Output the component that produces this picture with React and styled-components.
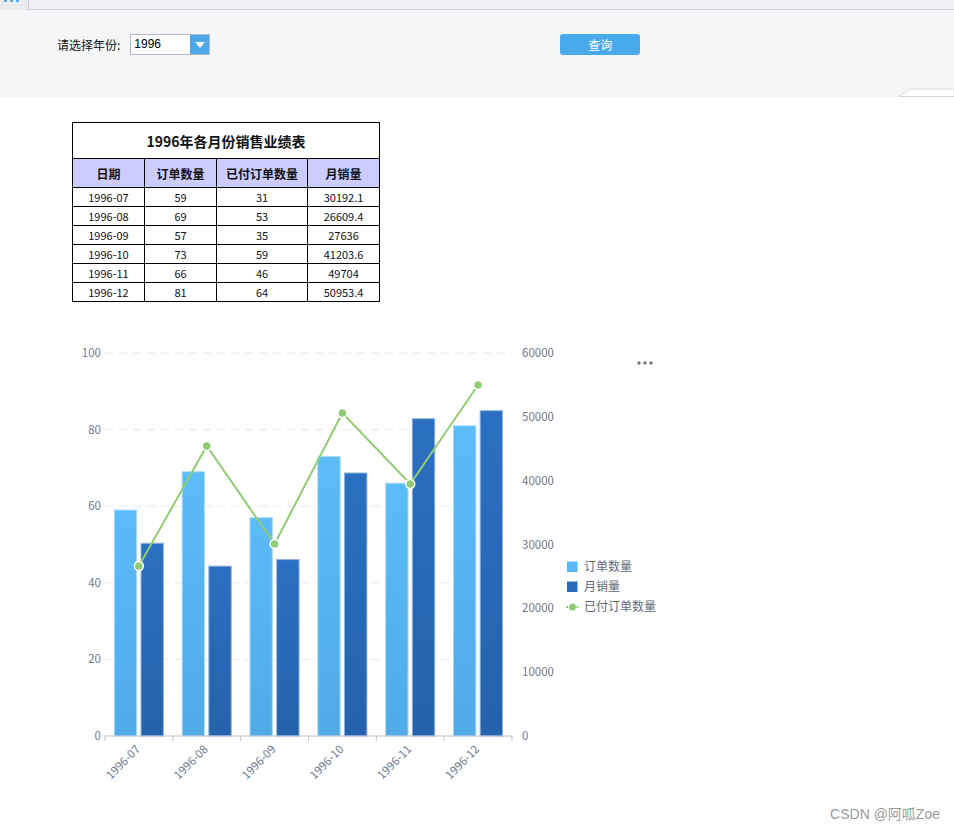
import React from "react";
import styled, { createGlobalStyle } from "styled-components";

const GlobalStyle = createGlobalStyle`
  html, body {
    margin: 0;
    padding: 0;
    background: #ffffff;
    font-family: "Noto Sans CJK SC", "Noto Sans", sans-serif;
  }
`;

const months = ["1996-07", "1996-08", "1996-09", "1996-10", "1996-11", "1996-12"];
const rows = [
  ["1996-07", 59, 31, "30192.1"],
  ["1996-08", 69, 53, "26609.4"],
  ["1996-09", 57, 35, "27636"],
  ["1996-10", 73, 59, "41203.6"],
  ["1996-11", 66, 46, "49704"],
  ["1996-12", 81, 64, "50953.4"],
];
const colWidths = [72, 72, 91, 72];
const orders = [59, 69, 57, 73, 66, 81];
const sales = [30192.1, 26609.4, 27636, 41203.6, 49704, 50953.4];
// line points as they sit in the picture
const linePts = [565, 445, 543, 412, 483, 384];

export default function App() {
  return (
    <>
      <GlobalStyle />
      <Page>
        <Header>
          <TabStrip>
            <Tab>
              <TabMark />
              <TabMark />
              <TabMark />
            </Tab>
          </TabStrip>
          <FormRow>
            <Label>请选择年份:</Label>
            <Select>
              <SelectValue>1996</SelectValue>
              <SelectArrow>
                <svg width="10" height="6" viewBox="0 0 10 6">
                  <path d="M0 0 L10 0 L5 6 Z" fill="#fff" />
                </svg>
              </SelectArrow>
            </Select>
            <QueryButton>查询</QueryButton>
          </FormRow>
          <CollapseTab>
            <svg width="56" height="9" viewBox="0 0 56 9">
              <path d="M1 8.5 L12 1 L56 1 L56 8.5 Z" fill="#fff" stroke="#d8d8d8" />
            </svg>
          </CollapseTab>
        </Header>

        <Content>
          <Table>
            <colgroup>
              {colWidths.map((w, i) => (
                <col key={i} style={{ width: w }} />
              ))}
            </colgroup>
            <tbody>
              <tr>
                <TitleCell colSpan={4}>1996年各月份销售业绩表</TitleCell>
              </tr>
              <tr>
                <HeadCell>日期</HeadCell>
                <HeadCell>订单数量</HeadCell>
                <HeadCell>已付订单数量</HeadCell>
                <HeadCell>月销量</HeadCell>
              </tr>
              {rows.map((r) => (
                <tr key={r[0]}>
                  {r.map((c, i) => (
                    <DataCell key={i}>{c}</DataCell>
                  ))}
                </tr>
              ))}
            </tbody>
          </Table>

          <ChartBox>
            <Chart />
          </ChartBox>
        </Content>

        <Watermark>CSDN @阿呱Zoe</Watermark>
      </Page>
    </>
  );
}

function Chart() {
  const x0 = 105;
  const x1 = 512;
  const base = 735;
  const top = 352;
  const band = (x1 - x0) / 6;
  const k = (base - top) / 100;
  const barW = 22.4;

  return (
    <svg width="620" height="480" viewBox="60 330 620 480">
      <defs>
        <linearGradient id="light" x1="0" y1="0" x2="0" y2="1">
          <stop offset="0" stopColor="#5bbcfa" />
          <stop offset="1" stopColor="#50aae8" />
        </linearGradient>
        <linearGradient id="dark" x1="0" y1="0" x2="0" y2="1">
          <stop offset="0" stopColor="#2b70c0" />
          <stop offset="1" stopColor="#2562ab" />
        </linearGradient>
      </defs>

      {[0, 1, 2, 3, 4, 5].map((i) => {
        const y = base - i * 20 * k;
        return (
          <g key={i}>
            {i > 0 && (
              <line x1={x0} x2={x1} y1={y} y2={y} stroke="#e3e9f1" strokeDasharray="8 6" />
            )}
            <AxisText x="101" y={y + 4} textAnchor="end">
              {i * 20}
            </AxisText>
          </g>
        );
      })}
      {[0, 1, 2, 3, 4, 5, 6].map((i) => (
        <AxisText key={i} x="522" y={base - (i * (base - top)) / 6 + 4}>
          {i * 10000}
        </AxisText>
      ))}

      {months.map((m, i) => {
        const bx = x0 + i * band;
        const lh = orders[i] * k;
        const dh = (sales[i] / 600) * k;
        return (
          <g key={m}>
            <rect x={bx + 9.3} y={base - lh} width={barW} height={lh} fill="url(#light)" stroke="#a9dcfc" strokeWidth="1" />
            <rect x={bx + 36} y={base - dh} width={barW} height={dh} fill="url(#dark)" stroke="#8fb0da" strokeWidth="1" />
          </g>
        );
      })}

      <line x1={x0} x2={x1} y1={base} y2={base} stroke="#b9c3d2" />
      {[0, 1, 2, 3, 4, 5, 6].map((i) => (
        <line key={i} x1={x0 + i * band} x2={x0 + i * band} y1={base} y2={base + 5} stroke="#b9c3d2" />
      ))}
      {months.map((m, i) => {
        const cx = x0 + (i + 0.5) * band + 2;
        return (
          <AxisText key={m} x={cx} y={base + 14} textAnchor="end" transform={`rotate(-45 ${cx} ${base + 14})`}>
            {m}
          </AxisText>
        );
      })}

      <polyline
        points={linePts.map((y, i) => `${x0 + (i + 0.5) * band},${y}`).join(" ")}
        fill="none"
        stroke="#91cc75"
        strokeWidth="2"
      />
      {linePts.map((y, i) => (
        <circle key={i} cx={x0 + (i + 0.5) * band} cy={y} r="4.5" fill="#91cc75" stroke="#fff" strokeWidth="1.5" />
      ))}

      <g fill="#777">
        <circle cx="639" cy="362" r="1.7" />
        <circle cx="645" cy="362" r="1.7" />
        <circle cx="651" cy="362" r="1.7" />
      </g>

      <rect x="567" y="560.5" width="10.5" height="10.5" fill="#58b8f6" />
      <LegendText x="584" y="570">订单数量</LegendText>
      <rect x="567" y="580.5" width="10.5" height="10.5" fill="#2a6bb9" />
      <LegendText x="584" y="590">月销量</LegendText>
      <line x1="566" x2="579" y1="606" y2="606" stroke="#91cc75" strokeWidth="2" strokeDasharray="2 1.5" />
      <circle cx="572.5" cy="606" r="3.5" fill="#91cc75" />
      <LegendText x="584" y="610">已付订单数量</LegendText>
    </svg>
  );
}

//! ****************** STYLES ******************//

const Page = styled.div`
  position: relative;
  width: 954px;
  min-height: 830px;
  background: #fff;
`;

const Header = styled.section`
  position: relative;
  height: 97px;
  background: #f5f6f8;
`;

const TabStrip = styled.div`
  height: 9px;
  background: #f0f1f4;
  border-bottom: 1px solid #cfd1d8;
  display: flex;
`;

const Tab = styled.div`
  width: 29px;
  height: 10px;
  background: #ebecef;
  border-right: 1px solid #c9cacf;
  display: flex;
  gap: 3px;
  padding-left: 4px;
  box-sizing: border-box;
`;

const TabMark = styled.span`
  width: 3px;
  height: 2px;
  background: #59aef0;
`;

const FormRow = styled.div`
  display: flex;
  align-items: center;
  padding: 24px 0 0 57px;
  height: 21px;
`;

const Label = styled.span`
  font-size: 12px;
  color: #111;
  margin-right: 10px;
`;

const Select = styled.div`
  display: flex;
  width: 80px;
  height: 21px;
  box-sizing: border-box;
  border: 1px solid #b5b9cc;
  background: #fff;
`;

const SelectValue = styled.span`
  flex: 1;
  font-family: "Liberation Sans", sans-serif;
  font-size: 12px;
  line-height: 19px;
  padding-left: 3px;
  color: #000;
`;

const SelectArrow = styled.span`
  width: 19px;
  background: #4ba9e9;
  display: flex;
  align-items: center;
  justify-content: center;
`;

const QueryButton = styled.button`
  margin-left: 350px;
  width: 80px;
  height: 21px;
  border: none;
  border-radius: 3px;
  background: #48aaeb;
  color: #fff;
  font-family: "Noto Sans CJK SC", sans-serif;
  font-size: 12px;
  padding: 0;
`;

const CollapseTab = styled.div`
  position: absolute;
  right: 0;
  bottom: 0;
  height: 9px;
  line-height: 0;
`;

const Content = styled.main`
  padding: 25px 0 0 72px;
`;

const Table = styled.table`
  border-collapse: collapse;
  width: 307px;
  table-layout: fixed;
  td {
    border: 1px solid #000;
    padding: 0;
    text-align: center;
  }
`;

const TitleCell = styled.td`
  height: 35px;
  font-size: 14px;
  font-weight: bold;
  color: #111;
`;

const HeadCell = styled.td`
  height: 28px;
  background: #ccccff;
  font-size: 12px;
  font-weight: bold;
  color: #111;
`;

const DataCell = styled.td`
  height: 18px;
  font-size: 11px;
  line-height: 17px;
  color: #111;
`;

const ChartBox = styled.div`
  margin: 29px 0 0 -12px;
  line-height: 0;
`;

const AxisText = styled.text`
  font-family: "Noto Sans CJK SC", sans-serif;
  font-size: 11.5px;
  fill: #6e7a8b;
`;

const LegendText = styled.text`
  font-family: "Noto Sans CJK SC", sans-serif;
  font-size: 12px;
  fill: #5e6b7c;
`;

const Watermark = styled.div`
  position: absolute;
  right: 14px;
  bottom: 7px;
  font-family: "Liberation Sans", "Noto Sans CJK SC", sans-serif;
  font-size: 14px;
  color: #9a9a9a;
`;
